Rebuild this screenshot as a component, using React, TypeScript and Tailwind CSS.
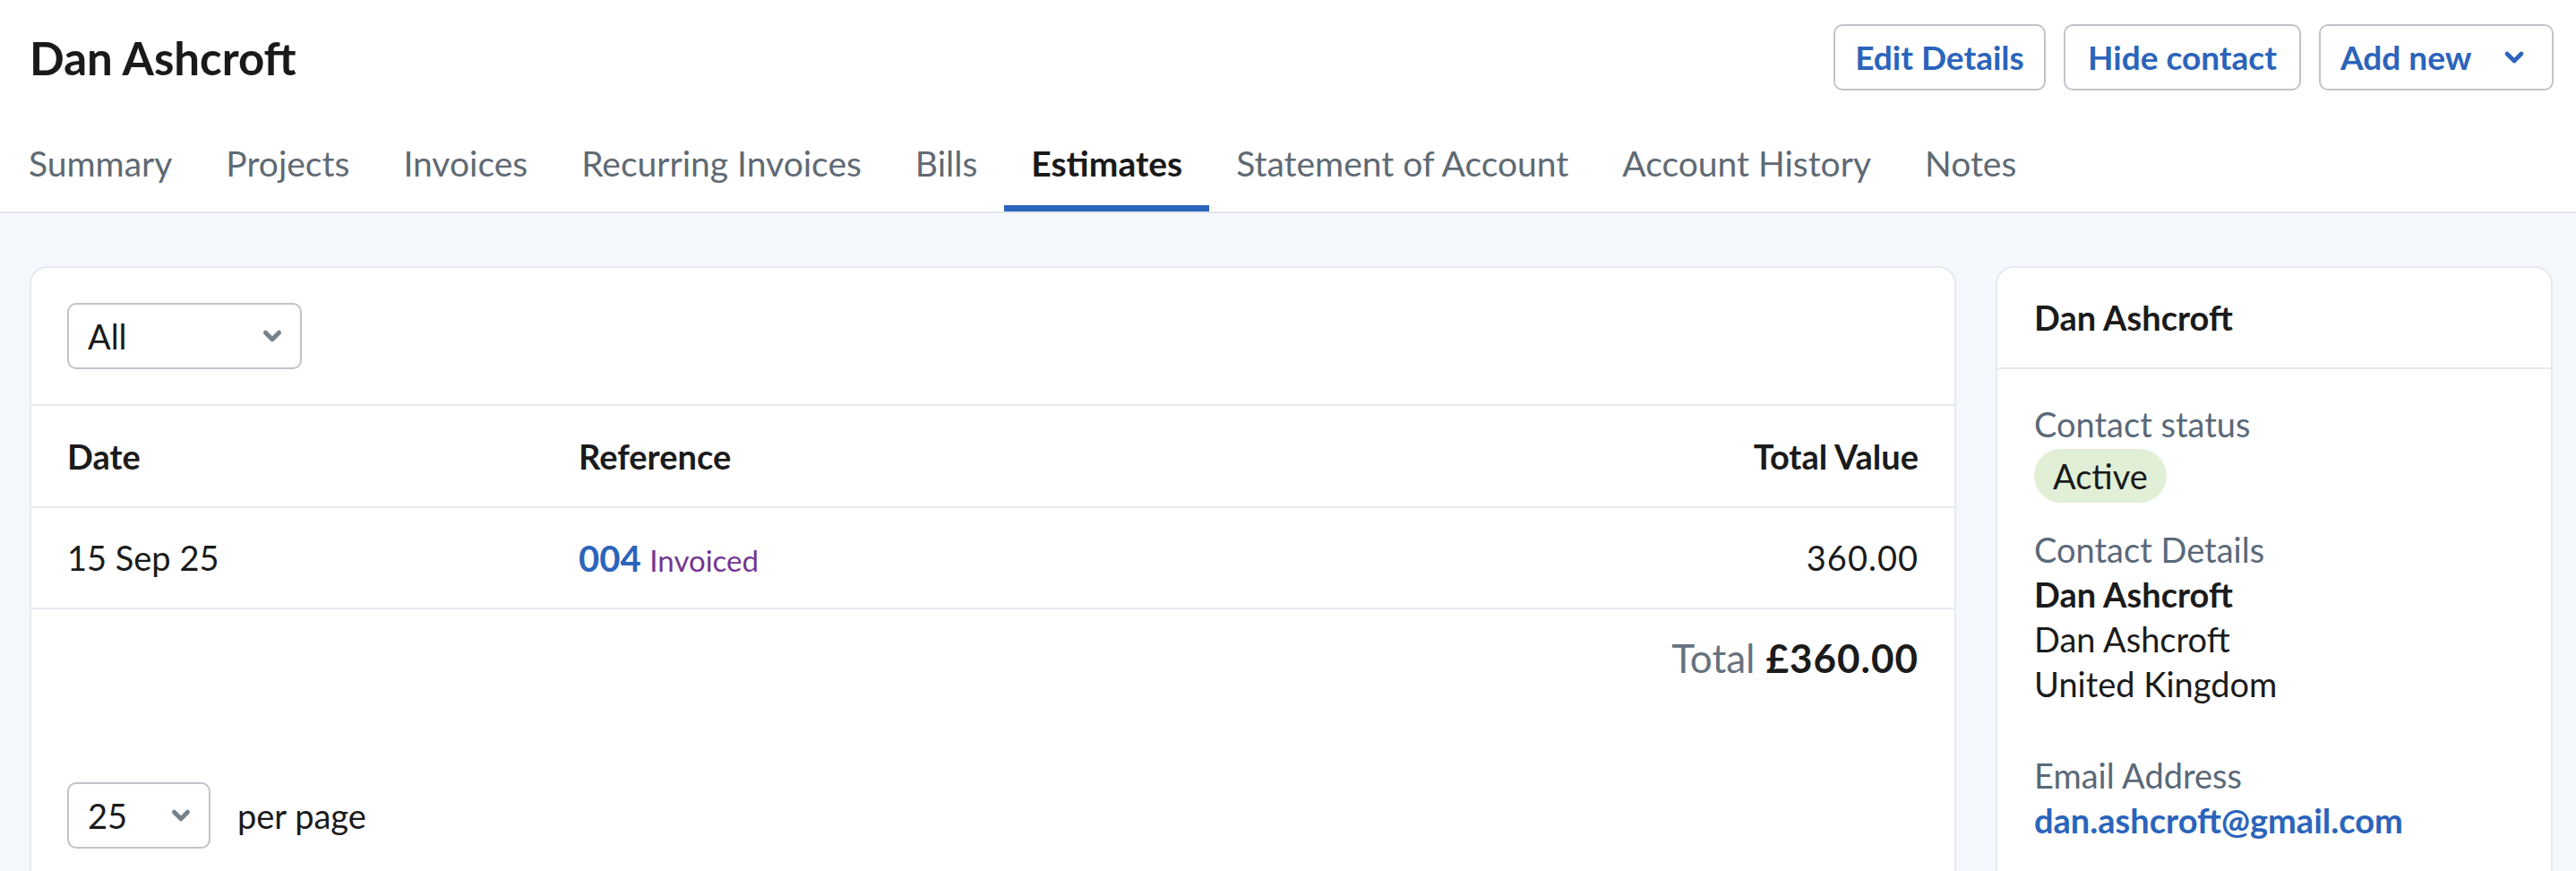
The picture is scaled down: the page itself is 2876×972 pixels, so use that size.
import { ChevronDown } from "lucide-react";

const tabs = [
  "Summary",
  "Projects",
  "Invoices",
  "Recurring Invoices",
  "Bills",
  "Estimates",
  "Statement of Account",
  "Account History",
  "Notes",
];

function SelectBox({ value, width }: { value: string; width: string }) {
  return (
    <div
      className={`flex h-[74px] ${width} items-center justify-between rounded-[10px] border-2 border-[#bfc4ca] bg-white pl-[21px] pr-[16px] text-[38px] text-[#1b1b1b]`}
    >
      <span>{value}</span>
      <ChevronDown className="h-[30px] w-[30px] text-[#76818c]" strokeWidth={4} />
    </div>
  );
}

export default function App() {
  return (
    <div className="min-h-screen bg-[#f4f7fc] font-['Lato',sans-serif] text-[#1b1b1b]">
      <header className="border-b-2 border-[#e3e6eb] bg-white pl-[33px] pr-[25px]">
        <div className="flex h-[128px] items-center justify-between">
          <h1 className="text-[51px] font-bold leading-none text-[#1a1a1a]">Dan Ashcroft</h1>
          <div className="flex gap-[20px]">
            <button className="h-[74px] w-[237px] rounded-[10px] border-2 border-[#c0c4ca] bg-white text-[37px] font-bold text-[#2b64bb]">
              Edit Details
            </button>
            <button className="h-[74px] w-[265px] rounded-[10px] border-2 border-[#c0c4ca] bg-white text-[37px] font-bold text-[#2b64bb]">
              Hide contact
            </button>
            <button className="flex h-[74px] w-[262px] items-center justify-between rounded-[10px] border-2 border-[#c0c4ca] bg-white pl-[22px] pr-[26px] text-[37px] font-bold text-[#2b64bb]">
              Add new
              <ChevronDown className="h-[32px] w-[32px]" strokeWidth={3.5} />
            </button>
          </div>
        </div>
        <nav className="-ml-[31px] flex h-[108px]">
          {tabs.map((tab) => (
            <a
              key={tab}
              className={`flex items-center border-b-[7px] px-[30px] pt-[7px] text-[39px] ${
                tab === "Estimates"
                  ? "border-[#2b64bb] font-bold text-[#1a1a1a]"
                  : "border-transparent text-[#5f6a74]"
              }`}
            >
              {tab}
            </a>
          ))}
        </nav>
      </header>

      <main className="grid grid-cols-[1fr_622px] items-start gap-[44px] pl-[33px] pr-[26px] pt-[59px]">
        <section className="min-h-[760px] rounded-[20px] border-2 border-[#e6e9ee] bg-white">
          <div className="border-b-2 border-[#e6e9ee] px-[40px] py-[39px]">
            <SelectBox value="All" width="w-[262px]" />
          </div>

          <table className="w-full border-collapse text-[38px]">
            <thead>
              <tr className="h-[113px] border-b-2 border-[#e6e9ee] text-left font-bold">
                <th className="w-[611px] pl-[40px]">Date</th>
                <th>Reference</th>
                <th className="pr-[40px] text-right">Total Value</th>
              </tr>
            </thead>
            <tbody>
              <tr className="h-[113px] border-b-2 border-[#e6e9ee]">
                <td className="pl-[40px]">15 Sep 25</td>
                <td>
                  <span className="text-[40px] font-bold text-[#2b64bb]">004</span>{" "}
                  <span className="text-[33px] text-[#743592]">Invoiced</span>
                </td>
                <td className="pr-[40px] text-right tracking-[1px]">360.00</td>
              </tr>
            </tbody>
          </table>

          <div className="flex items-baseline justify-end gap-[12px] px-[40px] pt-[21px]">
            <span className="text-[44px] text-[#66727d]">Total</span>
            <span className="text-[44px] font-bold tracking-[1px]">£360.00</span>
          </div>

          <div className="flex items-center gap-[30px] px-[40px] pt-[106px]">
            <SelectBox value="25" width="w-[160px]" />
            <span className="text-[38px]">per page</span>
          </div>
        </section>

        <aside className="min-h-[700px] rounded-[20px] border-2 border-[#e6e9ee] bg-white">
          <div className="flex h-[113px] items-center border-b-2 border-[#e6e9ee] px-[41px] text-[38px] font-bold">
            Dan Ashcroft
          </div>
          <div className="px-[41px] pt-[36px] text-[38px] leading-[50px]">
            <div className="text-[#5a6978]">Contact status</div>
            <div className="mt-[3px] inline-flex h-[60px] items-center rounded-full bg-[#e1efd7] px-[21px]">
              Active
            </div>
            <div className="mt-[27px] text-[#5a6978]">Contact Details</div>
            <div className="font-bold">Dan Ashcroft</div>
            <div>Dan Ashcroft</div>
            <div>United Kingdom</div>
            <div className="mt-[52px] text-[#5a6978]">Email Address</div>
            <div className="font-bold text-[#2b64bb]">dan.ashcroft@gmail.com</div>
          </div>
        </aside>
      </main>
    </div>
  );
}
